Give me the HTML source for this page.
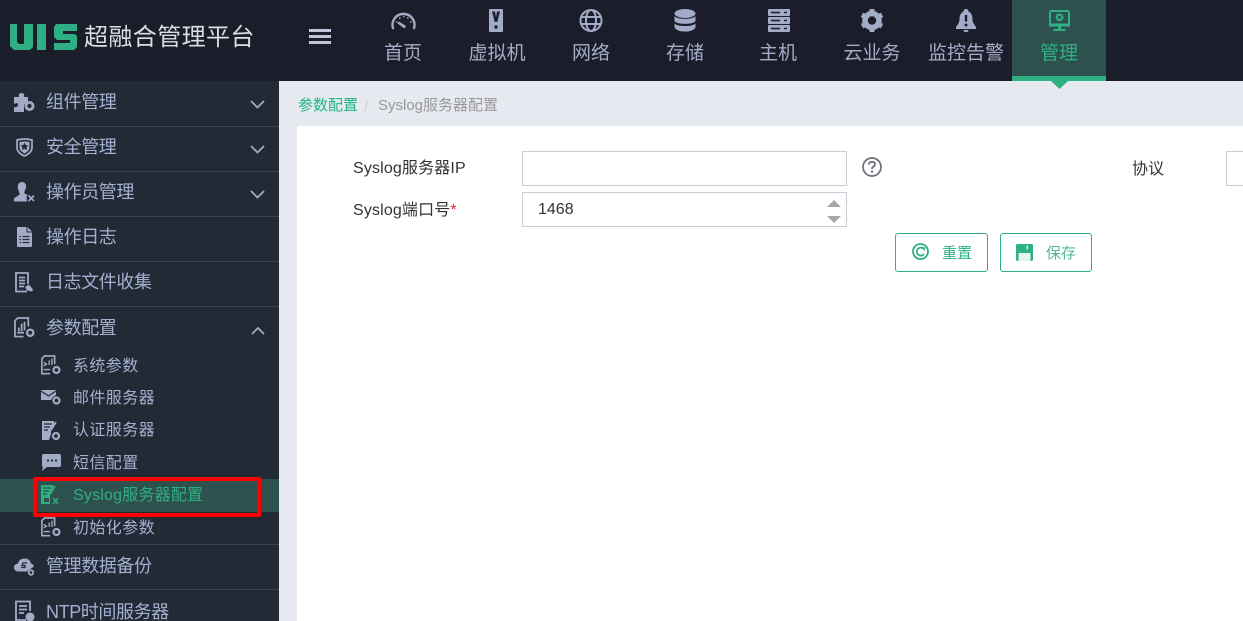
<!DOCTYPE html>
<html lang="zh-CN"><head><meta charset="utf-8"><title>UIS</title>
<style>
html,body{margin:0;padding:0;width:1243px;height:621px;overflow:hidden;background:#e6e9f0;}
body{position:relative;font-family:"Liberation Sans","Noto Sans CJK SC",sans-serif;}
.a{position:absolute;white-space:nowrap;}
.hdr{left:0;top:0;width:1243px;height:81px;background:#1b1e2a;}
.side{left:0;top:81px;width:279px;height:540px;background:#222a35;overflow:hidden;}
.n{position:absolute;top:0;width:94px;height:81px;text-align:center;color:#a3acc6;font-size:19px;}
.n span{position:absolute;left:0;width:94px;top:41px;line-height:26px;}
.n svg{position:absolute;left:32px;top:8px;}
.sep{position:absolute;left:0;width:279px;height:1px;background:#3b424c;}
.m{position:absolute;left:46px;color:#a3b0d0;font-size:18px;line-height:26px;white-space:nowrap;letter-spacing:-.4px;}
.s{position:absolute;left:73px;color:#a3b0d0;font-size:16px;line-height:22px;white-space:nowrap;letter-spacing:.4px;}
.ic{position:absolute;}
.lab{color:#333;font-size:16px;line-height:22px;letter-spacing:.15px;}
.inp{background:#fff;border:1px solid #cccbdc;box-sizing:border-box;}
.btn{border:1px solid #2fb080;border-radius:3px;box-sizing:border-box;background:#fff;height:39px;top:233px;}
</style></head><body>
<div class="a hdr"></div>
<div class="a" style="left:10px;top:23px;line-height:0;">
<svg width="68" height="28" viewBox="0 0 68 28"><g fill="#2fae84">
<path d="M0 1h7v18l2 2h5V1h9v23l-3 3H4l-4-4z"/>
<path d="M27 1h9v26h-9z"/>
<path d="M46 1h21v7H53v3h12l2 2v11l-3 3H44v-7h16v-3H47l-3-3V4z"/></g></svg></div>
<div class="a" style="left:84px;top:21px;font-size:24px;line-height:34px;color:#dcdee4;letter-spacing:0.4px;">超融合管理平台</div>
<div class="a" style="left:309px;top:29px;width:22px;height:3px;background:#c0c5dc;"></div>
<div class="a" style="left:309px;top:35px;width:22px;height:3px;background:#c0c5dc;"></div>
<div class="a" style="left:309px;top:41px;width:22px;height:3px;background:#c0c5dc;"></div>

<div class="n" style="left:356px"><svg width="30" height="24" viewBox="0 0 30 24"><path d="M5.300 21A11 11 0 1 1 25.700 21" fill="none" stroke="#a3acc6" stroke-width="2.400"/><path d="M11 13.500l7 4.500-1.500 2.500-7-5z" fill="#a3acc6"/><path d="M8 14h1.500M11 10h1.500M15 8.500h1.500M19 10h1.500M22 14h1.500" stroke="#a3acc6" stroke-width="1.600"/></svg><span>首页</span></div>
<div class="n" style="left:450px"><svg width="30" height="24" viewBox="0 0 30 24"><rect x="7" y="1" width="14" height="23" rx="1" fill="#a3acc6"/><path d="M10 3.500h3l1 6 1-6h3l-2.700 10.500h-2.600z" fill="#1b1e2a"/><circle cx="14" cy="19" r="1.700" fill="#1b1e2a"/></svg><span>虚拟机</span></div>
<div class="n" style="left:544px"><svg width="30" height="24" viewBox="0 0 30 24"><g fill="none" stroke="#a3acc6" stroke-width="2"><circle cx="15" cy="12.500" r="10.500"/><ellipse cx="15" cy="12.500" rx="5" ry="10.500"/><path d="M5 9h20M5 16h20"/></g></svg><span>网络</span></div>
<div class="n" style="left:638px"><svg width="30" height="24" viewBox="0 0 30 24"><g fill="#a3acc6"><ellipse cx="15" cy="5.500" rx="10.500" ry="4.500"/><path d="M4.500 8c2 3.800 19 3.800 21 0v5c-2 3.800-19 3.800-21 0z"/><path d="M4.500 15.200c2 3.800 19 3.800 21 0v4c-2 5.800-19 5.800-21 0z"/></g></svg><span>存储</span></div>
<div class="n" style="left:731px"><svg width="30" height="24" viewBox="0 0 30 24"><g fill="#a3acc6"><rect x="5" y="1" width="22" height="7" rx="1"/><rect x="5" y="9" width="22" height="7" rx="1"/><rect x="5" y="17" width="22" height="7" rx="1"/></g><path d="M8 4.500h9M8 12.500h9M8 20.500h9M21 4.500h3M21 12.500h3M21 20.500h3" stroke="#1b1e2a" stroke-width="1.600"/></svg><span>主机</span></div>
<div class="n" style="left:825px"><svg width="30" height="24" viewBox="0 0 30 24"><circle cx="15" cy="12.500" r="7" fill="none" stroke="#a3acc6" stroke-width="5.500"/><g stroke="#a3acc6" stroke-width="5"><path d="M15 1v4M15 20v4M5 6.800l3.500 2M21.500 16.200l3.500 2M5 18.200l3.500-2M21.500 8.800l3.500-2"/></g></svg><span>云业务</span></div>
<div class="n" style="left:919px"><svg width="30" height="24" viewBox="0 0 30 24"><path d="M15 1c2 0 2.500 1.500 2.500 2.500 3 1.500 4 4 4 8 0 3.500 2 5 3.500 7.500v2H5v-2c1.500-2.500 3.500-4 3.500-7.500 0-4 1-6.500 4-8C12.500 2.500 13 1 15 1zM12.500 22h5c0 3-5 3-5 0z" fill="#a3acc6"/><path d="M15 7v6.500" stroke="#1b1e2a" stroke-width="2.400"/><circle cx="15" cy="17" r="1.500" fill="#1b1e2a"/></svg><span>监控告警</span></div>
<div class="a" style="left:1012px;top:0;width:94px;height:81px;background:#2d514e;"></div>
<div class="a" style="left:1012px;top:76px;width:94px;height:5px;background:#2fb080;"></div>
<svg class="a" style="left:1051px;top:81px;" width="17" height="8"><path d="M0 0h17l-8.500 8z" fill="#2fb080"/></svg>
<div class="n" style="left:1012px;color:#2fb080"><svg width="30" height="24" viewBox="0 0 30 24"><rect x="6" y="3" width="19" height="14" rx="1.500" fill="none" stroke="#2fb080" stroke-width="2"/><path d="M5 15.500h21v3H5z" fill="#2fb080"/><path d="M14 18h3v3h-3zM9.500 21h12v2H9.500z" fill="#2fb080"/><circle cx="15.500" cy="9.300" r="2.600" fill="none" stroke="#2fb080" stroke-width="2"/><path d="M15.500 5.200v1.500M15.500 12v1.500M11.400 9.300h1.500M18.200 9.300h1.500M12.500 6.300l1 1M17.500 11.300l1 1M12.500 12.300l1-1M17.500 7.300l1-1" stroke="#2fb080" stroke-width="1.200"/></svg><span>管理</span></div>

<div class="a side">
<div class="sep" style="top:45px"></div><div class="sep" style="top:90px"></div><div class="sep" style="top:135px"></div><div class="sep" style="top:180px"></div><div class="sep" style="top:225px"></div><div class="sep" style="top:463px"></div><div class="sep" style="top:508px"></div>
<div class="a" style="left:0;top:398px;width:279px;height:33px;background:#2d514e;"></div>

<svg class="ic" style="left:14px;top:12px" width="21" height="19" viewBox="0 0 21 19"><path d="M0 4h5C4 1 6 0 7.500 0S11 1 10 4h4v4l-4 4v7H0v-5c3 1 4-1 4-2.500S3 10 0 11z" fill="#a3acc6"/><circle cx="15.500" cy="13" r="3.600" fill="none" stroke="#a3acc6" stroke-width="2.800"/></svg>
<div class="m" style="top:8px">组件管理</div>
<svg class="ic" style="left:16px;top:57px" width="17" height="19" viewBox="0 0 17 19"><path d="M1 2Q8.500 0 16 2v8q-.5 5-7.500 8Q1.500 15 1 10z" fill="none" stroke="#a3acc6" stroke-width="1.700"/><path d="M3.500 4q5-1 10 0v6q-.5 3-5 5.500Q4 13 3.500 10z" fill="#a3acc6"/><path d="M8.500 4.500l1.200 2.600 2.800.3-2 1.900.6 2.800-2.600-1.400-2.600 1.400.6-2.800-2-1.900 2.800-.3z" fill="#222a35"/></svg>
<div class="m" style="top:53px">安全管理</div>
<svg class="ic" style="left:14px;top:101px" width="21" height="20" viewBox="0 0 21 20"><path d="M8 0c3 0 4.500 2.500 4 5.500-.3 2-1.200 3.500-1.800 4.500 0 1.500 1.500 2 3.300 2.800l-1 2.200.5 4.500H0v-3c1-1.500 4.500-2.500 5.800-4.500C4.800 9 4 7.500 3.800 5.500 3.400 2.500 5 0 8 0z" fill="#a3acc6"/><path d="M14.500 13.500l5.500 5.500M20 13.500L14.500 19" stroke="#a3acc6" stroke-width="1.600"/></svg>
<div class="m" style="top:98px">操作员管理</div>
<svg class="ic" style="left:17px;top:146px" width="15" height="20" viewBox="0 0 15 20"><path d="M1 0h8.500v5.500H15V19q0 1-1 1H1q-1 0-1-1V1q0-1 1-1zM10.500 0L15 4.500h-4.500z" fill="#a3acc6"/><path d="M2.500 9.500h1.500M5.500 9.500h7M2.500 12.500h1.500M5.500 12.500h7M2.500 15.500h1.500M5.500 15.500h7" stroke="#222a35" stroke-width="1.300"/></svg>
<div class="m" style="top:143px">操作日志</div>
<svg class="ic" style="left:15px;top:191px" width="19" height="21" viewBox="0 0 19 21"><path d="M12 19.500H1V1h12v11" fill="none" stroke="#a3acc6" stroke-width="1.800"/><path d="M4 5.500h6M4 8.500h6M4 11.500h6M4 14.500h5" stroke="#a3acc6" stroke-width="1.700"/><path d="M10 15l4-2.500 4 5-1 2-5-1z" fill="#a3acc6"/></svg>
<div class="m" style="top:188px">日志文件收集</div>
<svg class="ic" style="left:14px;top:236px" width="21" height="21" viewBox="0 0 22 22"><path d="M10 20.500H1V4l3-3h11v9" fill="none" stroke="#a3acc6" stroke-width="1.800"/><path d="M3.500 16.500h7M5 11v4M8 7v8M11 5v9" stroke="#a3acc6" stroke-width="1.800"/><circle cx="17" cy="16.500" r="3.300" fill="none" stroke="#a3acc6" stroke-width="2.400"/></svg>
<div class="m" style="top:234px">参数配置</div>

<svg class="ic" style="left:41px;top:274px" width="20" height="20" viewBox="0 0 22 22"><path d="M10 20.500H1V4l3-3h11v9" fill="none" stroke="#a3acc6" stroke-width="1.800"/><path d="M3 8l3 2-3 2M3 16h7M9 6v5M12 4v7" stroke="#a3acc6" stroke-width="1.500" fill="none"/><circle cx="17" cy="16.500" r="3.300" fill="none" stroke="#a3acc6" stroke-width="2.400"/></svg>
<div class="s" style="top:275px">系统参数</div>
<svg class="ic" style="left:41px;top:309px" width="20" height="15" viewBox="0 0 20 15"><path d="M0 0h15v5l-3 2-2 3H0z" fill="#a3acc6"/><path d="M0 1l7.500 5L15 1" fill="none" stroke="#222a35" stroke-width="1.200"/><circle cx="15.500" cy="10.500" r="3" fill="none" stroke="#a3acc6" stroke-width="2.200"/></svg>
<div class="s" style="top:307px">邮件服务器</div>
<svg class="ic" style="left:42px;top:339px" width="19" height="21" viewBox="0 0 19 21"><path d="M0 1h12v6l-3 4v3l-2 6H0z" fill="#a3acc6"/><path d="M2 4h8M2 7h6M2 10h4" stroke="#222a35" stroke-width="1.300"/><path d="M14 2l-5 8" stroke="#a3acc6" stroke-width="1.800"/><circle cx="14" cy="16" r="3" fill="none" stroke="#a3acc6" stroke-width="2.200"/></svg>
<div class="s" style="top:339px">认证服务器</div>
<svg class="ic" style="left:41px;top:373px" width="20" height="17" viewBox="0 0 20 17"><path d="M3 0h15q2 0 2 2v9q0 2-2 2H6l-5 4 1-4Q1 13 1 11V2q0-2 2-2z" fill="#a3acc6"/><path d="M6 6.500h2M10 6.500h2M14 6.500h2" stroke="#222a35" stroke-width="2"/></svg>
<div class="s" style="top:372px">短信配置</div>
<svg class="ic" style="left:41px;top:404px" width="19" height="20" viewBox="0 0 19 20"><path d="M0 0h12v6l-3 4v9H0z" fill="#2fb080"/><path d="M2 3h8M2 6h6M2 9h4" stroke="#2d514e" stroke-width="1.300"/><path d="M14 1l-5 8" stroke="#2fb080" stroke-width="1.800"/><path d="M3 13h5v4H3z" fill="#2d514e"/><path d="M12 13l5 6M17 13l-5 6" stroke="#2fb080" stroke-width="1.400"/></svg>
<div class="s" style="top:404px;color:#2fb080;letter-spacing:.2px">Syslog服务器配置</div>
<svg class="ic" style="left:41px;top:436px" width="20" height="20" viewBox="0 0 22 22"><path d="M10 20.500H1V4l3-3h11v9" fill="none" stroke="#a3acc6" stroke-width="1.800"/><path d="M3 8l3 2-3 2M3 16h7M9 6v5M12 4v7" stroke="#a3acc6" stroke-width="1.500" fill="none"/><circle cx="17" cy="16.500" r="3.300" fill="none" stroke="#a3acc6" stroke-width="2.400"/></svg>
<div class="s" style="top:437px">初始化参数</div>

<svg class="ic" style="left:14px;top:477px" width="21" height="18" viewBox="0 0 21 18"><path d="M5 13.500H4Q0 13 0 9.500t4-4Q5 .5 10.500 .5 16 .5 17 5.500q2 .5 3 3l-3 2-3 2-1 1z" fill="#a3acc6"/><path d="M13 5H9L8 7.500h3v2H7" fill="none" stroke="#222a35" stroke-width="1.300"/><circle cx="17" cy="14.500" r="2.300" fill="none" stroke="#a3acc6" stroke-width="1.800"/></svg>
<div class="m" style="top:472px">管理数据备份</div>
<svg class="ic" style="left:15px;top:519px" width="20" height="22" viewBox="0 0 20 22"><path d="M11 20H1V1.500h14V11" fill="none" stroke="#a3acc6" stroke-width="1.800"/><path d="M4 6h8M4 9.500h8M4 13h5" stroke="#a3acc6" stroke-width="1.800"/><circle cx="15" cy="17" r="4.500" fill="#a3acc6"/></svg>
<div class="m" style="top:518px">NTP时间服务器</div>

<svg class="ic" style="left:250px;top:19px" width="15" height="9"><path d="M1 1l6.500 6.500L14 1" fill="none" stroke="#a3acc6" stroke-width="1.800"/></svg>
<svg class="ic" style="left:250px;top:64px" width="15" height="9"><path d="M1 1l6.500 6.500L14 1" fill="none" stroke="#a3acc6" stroke-width="1.800"/></svg>
<svg class="ic" style="left:250px;top:109px" width="15" height="9"><path d="M1 1l6.500 6.500L14 1" fill="none" stroke="#a3acc6" stroke-width="1.800"/></svg>
<svg class="ic" style="left:251px;top:245px" width="14" height="9"><path d="M1 8l6-6 6 6" fill="none" stroke="#a3acc6" stroke-width="1.800"/></svg>
</div>

<div class="a" style="left:33px;top:477px;width:228px;height:40px;box-sizing:border-box;border:4px solid #f00;border-radius:2px;"></div>

<div class="a" style="left:298px;top:96px;font-size:15px;line-height:20px;color:#1fb585;">参数配置</div>
<div class="a" style="left:364px;top:96px;font-size:14px;line-height:20px;color:#ccc;">/</div>
<div class="a" style="left:378px;top:96px;font-size:15px;line-height:20px;color:#999;">Syslog服务器配置</div>
<div class="a" style="left:297px;top:126px;width:946px;height:495px;background:#fff;"></div>

<div class="a lab" style="left:353px;top:158px;">Syslog服务器IP</div>
<div class="a inp" style="left:522px;top:151px;width:325px;height:35px;"></div>
<svg class="a" style="left:861px;top:156px;" width="22" height="22" viewBox="0 0 22 22"><circle cx="11" cy="11" r="9" fill="none" stroke="#6d737b" stroke-width="1.800"/><path d="M8 8.500Q8 5.800 11 5.800 14 5.800 14 8.300 14 9.800 12.300 10.700 11 11.400 11 13" fill="none" stroke="#6d737b" stroke-width="1.800"/><circle cx="11" cy="15.600" r="1.200" fill="#6d737b"/></svg>
<div class="a lab" style="left:1132px;top:159px;">协议</div>
<div class="a inp" style="left:1226px;top:151px;width:40px;height:35px;"></div>

<div class="a lab" style="left:353px;top:200px;">Syslog端口号<span style="color:#e8232f">*</span></div>
<div class="a inp" style="left:522px;top:192px;width:325px;height:35px;"></div>
<div class="a" style="left:538px;top:199px;font-size:16px;line-height:22px;color:#333;">1468</div>
<svg class="a" style="left:826px;top:199px;" width="16" height="26"><path d="M1 8L8 1l7 7z" fill="#a5a5a5"/><path d="M1 17h14l-7 7z" fill="#a5a5a5"/></svg>

<div class="a btn" style="left:895px;width:93px;"></div>
<svg class="a" style="left:911px;top:242px;" width="19" height="19" viewBox="0 0 19 19"><circle cx="9.500" cy="9.500" r="7.500" fill="none" stroke="#2fb080" stroke-width="1.800"/><path d="M13 7.200A4 4 0 1 0 13 12" fill="none" stroke="#2fb080" stroke-width="1.800"/><path d="M10.500 5l4 .5-1 3.500z" fill="#2fb080"/></svg>
<div class="a" style="left:942px;top:244px;font-size:15px;line-height:20px;color:#2fb080;">重置</div>
<div class="a btn" style="left:1000px;width:92px;"></div>
<svg class="a" style="left:1016px;top:244px;" width="17" height="17" viewBox="0 0 17 17"><rect width="17" height="17" rx="1.500" fill="#2fb080"/><path d="M2.500 9h12v8h-12z" fill="#e3f4ed"/><path d="M10.500 1.500h1.500v4h-1.500z" fill="#e3f4ed"/></svg>
<div class="a" style="left:1046px;top:244px;font-size:15px;line-height:20px;color:#52b892;">保存</div>
</body></html>
